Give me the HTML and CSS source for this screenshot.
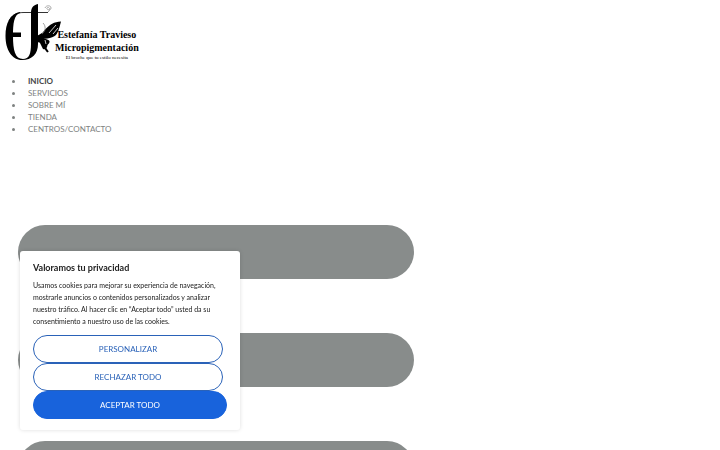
FILE: index.html
```
<!DOCTYPE html>
<html lang="es">
<head>
<meta charset="utf-8">
<meta name="viewport" content="width=device-width, initial-scale=1">
<title>Estefanía Travieso Micropigmentación</title>
<link rel="stylesheet" href="styles.css">
</head>
<body>
<header>
  <a class="brand" href="#">
    <svg class="brand-mark" viewBox="0 0 64 64" aria-hidden="true">
      <path fill="none" stroke="#000" stroke-width=".8" d="M48 12.500H24C16 12.500 12 15 9 21"/>
      <path d="M20 12C10 14 5.500 23 5.500 36C5.500 50 12 60 22 60C32 60 38 54 38 44V4C33 5 31 8 31 13V44C31 54 29 59 23 59C15 59 13 50 13 36C13 23 14 15 20 13Z"/>
      <path d="M12 32.500H21V37H12Z"/>
      <path d="M38 38C43 34 47 22 61 21.500C60 25 59 31 56 35C52 39 43 39 38 39Z"/>
      <path d="M38 38C43 38 48 39 49.500 41C50 43 48 44 47.500 45C47 49 45 50 43 49C42 47 40 43 38 39Z"/>
      <path fill="none" stroke="#000" stroke-width="2" d="M38 36C41 40 44 47 48 52"/>
      <path d="M37 36L42 33L44 38L42 43L37 42Z"/>
      <path fill="none" stroke="#777" stroke-width=".7" d="M42 34C46 31 46 26 43 23"/>
      <path fill="none" stroke="#fff" stroke-width=".8" d="M49 33L56 25M53 34L58 28M45 40L46 44"/>
      <path fill="none" stroke="#aaa" stroke-width="1" d="M45 8C46 5 51 5 51 8C51 11 46 10 47 8C48 6 52 9 48 12"/>
    </svg>
    <span class="brand-text">
      <span class="brand-name">Estefanía Travieso</span>
      <span class="brand-name">Micropigmentación</span>
      <span class="brand-tagline">El broche que tu estilo necesita</span>
    </span>
  </a>
  <nav>
    <ul class="menu">
      <li><a class="current" href="#">INICIO</a></li>
      <li><a href="#">SERVICIOS</a></li>
      <li><a href="#">SOBRE MÍ</a></li>
      <li><a href="#">TIENDA</a></li>
      <li><a href="#">CENTROS/CONTACTO</a></li>
    </ul>
  </nav>
</header>
<main>
  <button class="menu-toggle" type="button" aria-label="Menú">
    <span class="bar"></span>
    <span class="bar"></span>
    <span class="bar"></span>
  </button>
</main>
<section class="consent" aria-labelledby="consent-title">
  <h2 id="consent-title">Valoramos tu privacidad</h2>
  <p>Usamos cookies para mejorar su experiencia de navegación, mostrarle anuncios o contenidos personalizados y analizar nuestro tráfico. Al hacer clic en “Aceptar todo” usted da su consentimiento a nuestro uso de las cookies.</p>
  <div class="actions">
    <button type="button">PERSONALIZAR</button>
    <button type="button">RECHAZAR TODO</button>
    <button class="accept" type="button">ACEPTAR TODO</button>
  </div>
</section>
</body>
</html>
```
FILE: styles.css
```
* {
  box-sizing: border-box;
}

body {
  display: flex;
  flex-direction: column;
  margin: 0;
  height: 100vh;
  background: #fff;
  color: #212121;
  font-family: Lato, sans-serif;
}

main {
  flex: 1;
  min-height: 0;
  padding: 90px 0 0 18px;
  overflow: hidden;
}

.brand {
  display: flex;
  align-items: flex-start;
  color: #000;
  text-decoration: none;
}

.brand-mark {
  width: 64px;
  height: 64px;
}

.brand-text {
  display: flex;
  flex-direction: column;
  align-items: center;
  margin-left: -9px;
  padding-top: 28px;
  font-family: "Liberation Serif", serif;
  white-space: nowrap;
}

.brand-name {
  font-size: 10px;
  font-weight: 700;
  line-height: 13px;
}

.brand-tagline {
  font-size: 5px;
  line-height: 8px;
}

.menu {
  margin: 11px 0 0;
  padding-left: 12px;
  color: #7e8281;
  font-size: 8px;
  line-height: 12px;
  list-style: none;
}

.menu li {
  display: flex;
  align-items: center;
  gap: 13px;
}

.menu li::before {
  content: "";
  width: 3px;
  height: 3px;
  border-radius: 50%;
  background: #7e8281;
}

.menu a {
  color: inherit;
  text-decoration: none;
}

.menu .current {
  color: #444;
  font-weight: 700;
}

.menu-toggle {
  display: flex;
  flex-direction: column;
  gap: 54px;
  width: 56.4%;
  padding: 0;
  border: 0;
  background: none;
}

.bar {
  width: 100%;
  height: 54px;
  border-radius: 27px;
  background: #888c8b;
}

.consent {
  position: fixed;
  bottom: 20px;
  left: 20px;
  width: 220px;
  padding: 11px 13px;
  border-radius: 3px;
  background: #fff;
  box-shadow: 0 0 4px #0002;
}

.consent h2 {
  margin: 0;
  font-size: 9px;
  line-height: 12px;
}

.consent p {
  margin: 5px 0 8px;
  font-size: 7px;
  line-height: 12px;
}

.actions {
  display: flex;
  flex-direction: column;
}

.actions button {
  height: 28px;
  margin-right: 4px;
  padding: 0;
  border: 1px solid #2a62b8;
  border-radius: 14px;
  background: #fff;
  color: #2a62b8;
  font-family: inherit;
  font-size: 8px;
}

.actions .accept {
  margin-right: 0;
  border-color: #1863dc;
  background: #1863dc;
  color: #fff;
}
```
